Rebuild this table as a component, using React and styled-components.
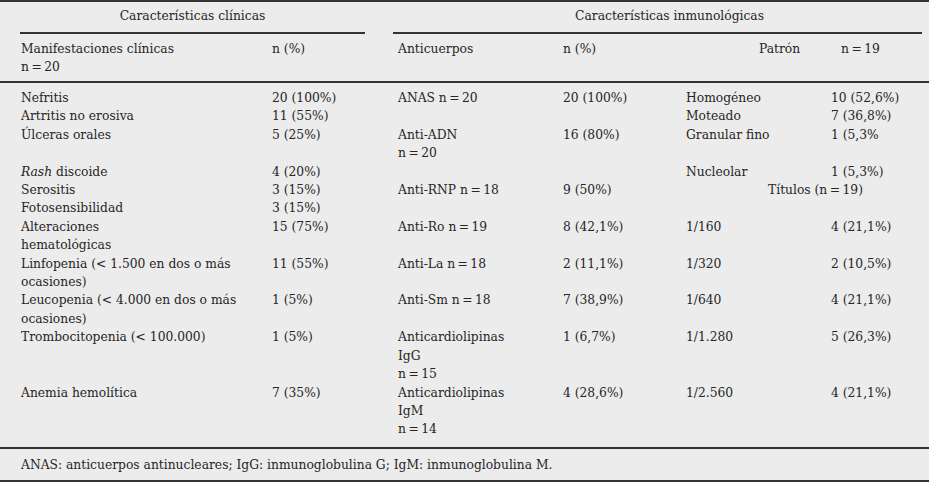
import React from "react";
import styled, { createGlobalStyle } from "styled-components";

const GlobalStyle = createGlobalStyle`
  html, body {
    margin: 0;
    padding: 0;
    background: #ffffff;
  }
  body {
    font-family: "DejaVu Serif", "Liberation Serif", serif;
    color: #262626;
  }
`;

const rows = [
  { a: ["Nefritis"], b: "20 (100%)", c: ["ANAS n\u2009=\u200920"], d: "20 (100%)", e: "Homogéneo", f: "10 (52,6%)" },
  { a: ["Artritis no erosiva"], b: "11 (55%)", e: "Moteado", f: "7 (36,8%)" },
  { a: ["Úlceras orales"], b: "5 (25%)", c: ["Anti-ADN", "n\u2009=\u200920"], d: "16 (80%)", e: "Granular fino", f: "1 (5,3%" },
  { a: [<><i>Rash</i> discoide</>], b: "4 (20%)", e: "Nucleolar", f: "1 (5,3%)" },
  { a: ["Serositis"], b: "3 (15%)", c: ["Anti-RNP n\u2009=\u200918"], d: "9 (50%)", span: "Títulos (n\u2009=\u200919)" },
  { a: ["Fotosensibilidad"], b: "3 (15%)" },
  { a: ["Alteraciones", "hematológicas"], b: "15 (75%)", c: ["Anti-Ro n\u2009=\u200919"], d: "8 (42,1%)", e: "1/160", f: "4 (21,1%)" },
  { a: ["Linfopenia (< 1.500 en dos o más", "ocasiones)"], b: "11 (55%)", c: ["Anti-La n\u2009=\u200918"], d: "2 (11,1%)", e: "1/320", f: "2 (10,5%)" },
  { a: ["Leucopenia (< 4.000 en dos o más", "ocasiones)"], b: "1 (5%)", c: ["Anti-Sm n\u2009=\u200918"], d: "7 (38,9%)", e: "1/640", f: "4 (21,1%)" },
  { a: ["Trombocitopenia (< 100.000)"], b: "1 (5%)", c: ["Anticardiolipinas", "IgG", "n\u2009=\u200915"], d: "1 (6,7%)", e: "1/1.280", f: "5 (26,3%)" },
  { a: ["Anemia hemolítica"], b: "7 (35%)", c: ["Anticardiolipinas", "IgM", "n\u2009=\u200914"], d: "4 (28,6%)", e: "1/2.560", f: "4 (21,1%)", last: true },
];

function Lines({ lines }) {
  if (!lines) return null;
  return lines.map((l, i) => <Line key={i}>{l}</Line>);
}

export default function App() {
  return (
    <>
      <GlobalStyle />
      <Panel>
        <Table>
          <colgroup>
            <col style={{ width: 267 }} />
            <col style={{ width: 126 }} />
            <col style={{ width: 165 }} />
            <col style={{ width: 123 }} />
            <col style={{ width: 145 }} />
            <col style={{ width: 103 }} />
          </colgroup>
          <thead>
            <tr>
              <SectionCell colSpan={2}>
                <SectionTitle $left={20} $right={28}>Características clínicas</SectionTitle>
              </SectionCell>
              <SectionCell colSpan={4}>
                <SectionTitle $left={0} $right={7} $shift={12}>Características inmunológicas</SectionTitle>
              </SectionCell>
            </tr>
            <HeadRow>
              <HeadCell $indent={21}>
                <Line>Manifestaciones clínicas</Line>
                <Line>n&thinsp;=&thinsp;20</Line>
              </HeadCell>
              <HeadCell>n (%)</HeadCell>
              <HeadCell>Anticuerpos</HeadCell>
              <HeadCell>n (%)</HeadCell>
              <HeadCell $indent={78}>Patrón</HeadCell>
              <HeadCell $indent={15}>n&thinsp;=&thinsp;19</HeadCell>
            </HeadRow>
          </thead>
          <tbody>
            {rows.map((r, i) => (
              <BodyRow key={i} $first={i === 0} $last={r.last}>
                <Cell $indent={21}><Lines lines={r.a} /></Cell>
                <Cell>{r.b}</Cell>
                <Cell><Lines lines={r.c} /></Cell>
                <Cell>{r.d}</Cell>
                {r.span ? (
                  <Cell colSpan={2} $indent={87}>{r.span}</Cell>
                ) : (
                  <>
                    <Cell>{r.e}</Cell>
                    <Cell>{r.f}</Cell>
                  </>
                )}
              </BodyRow>
            ))}
          </tbody>
          <tfoot>
            <tr>
              <FootCell colSpan={6}>
                ANAS: anticuerpos antinucleares; IgG: inmunoglobulina G; IgM: inmunoglobulina M.
              </FootCell>
            </tr>
          </tfoot>
        </Table>
      </Panel>
    </>
  );
}

const Panel = styled.div`
  width: 929px;
  background: #ececec;
  border-top: 2px solid #333;
`;

const Table = styled.table`
  width: 929px;
  table-layout: fixed;
  border-collapse: collapse;
  font-size: 12.3px;
  line-height: 18.4px;
  color: #262626;

  td,
  th {
    font-weight: normal;
    text-align: left;
    vertical-align: top;
    white-space: nowrap;
  }
`;

const SectionCell = styled.th`
  padding: 0;
`;

const SectionTitle = styled.div`
  margin: 0 ${(p) => p.$right}px 0 ${(p) => p.$left}px;
  height: 30px;
  line-height: 29px;
  text-align: center;
  padding-left: ${(p) => (p.$shift || 0) * 2}px;
  border-bottom: 2px solid #333;
`;

const HeadRow = styled.tr`
  border-bottom: 2px solid #333;
`;

const HeadCell = styled.th`
  height: 48px;
  padding: 6px 0 0 ${(p) => p.$indent ?? 5}px;
  box-sizing: border-box;
`;

const BodyRow = styled.tr`
  td {
    padding-top: ${(p) => (p.$first ? 6 : 0)}px;
    padding-bottom: ${(p) => (p.$last ? 8 : 0)}px;
  }
  ${(p) => p.$last && "border-bottom: 2px solid #333;"}
`;

const Cell = styled.td`
  padding-left: ${(p) => p.$indent ?? 5}px;
`;

const Line = styled.div`
  line-height: 18.4px;
`;

const FootCell = styled.td`
  height: 30px;
  padding: 1px 0 0 21px;
  vertical-align: middle !important;
  border-bottom: 2px solid #333;
`;
